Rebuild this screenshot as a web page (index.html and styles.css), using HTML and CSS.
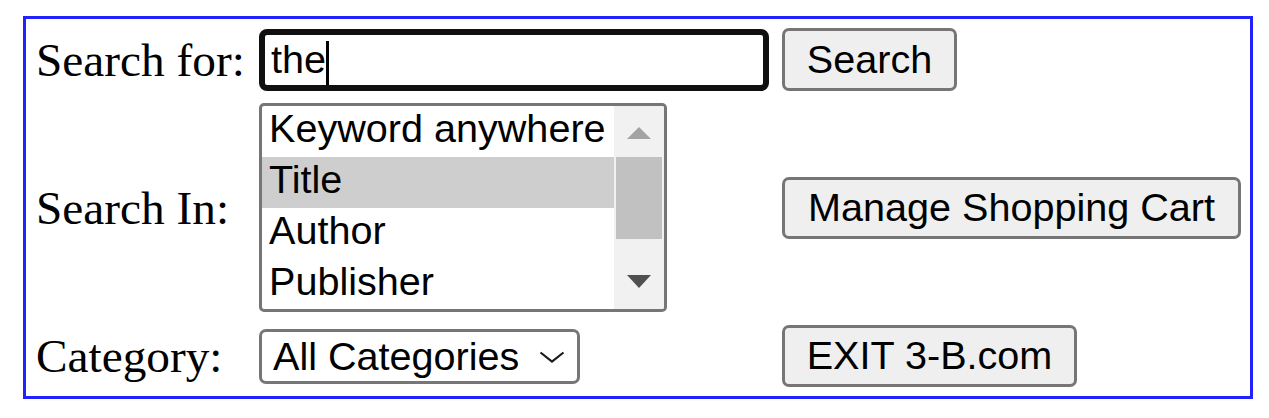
FILE: index.html
```html
<html>
    <head>
        <link rel="stylesheet" href="styles.css">
    </head>
    <body>
        <form class="search-box">
            <label class="label">Search for:</label>
            <div class="cell">
                <div class="text-input">the<span class="caret"></span></div>
            </div>
            <div class="cell">
                <button type="button" class="btn btn-search">Search</button>
            </div>

            <label class="label">Search In:</label>
            <div class="cell">
                <div class="listbox">
                    <ul class="options">
                        <li class="option">Keyword anywhere</li>
                        <li class="option option--selected">Title</li>
                        <li class="option">Author</li>
                        <li class="option">Publisher</li>
                    </ul>
                    <div class="scrollbar">
                        <div class="scroll-btn"><span class="arrow arrow--up"></span></div>
                        <div class="scroll-thumb"></div>
                        <div class="scroll-track"></div>
                        <div class="scroll-btn"><span class="arrow arrow--down"></span></div>
                    </div>
                </div>
            </div>
            <div class="cell">
                <button type="button" class="btn btn-cart">Manage Shopping Cart</button>
            </div>

            <label class="label">Category:</label>
            <div class="cell">
                <div class="select">
                    <span>All Categories</span>
                    <svg class="chevron" width="26" height="12" viewBox="0 0 26 12">
                        <polyline points="1.5,1.5 13,10.5 24.5,1.5" fill="none" stroke="#1a1a1a" stroke-width="2.2" />
                    </svg>
                </div>
            </div>
            <div class="cell">
                <button type="button" class="btn btn-exit">EXIT 3-B.com</button>
            </div>
        </form>
    </body>
</html>
```

FILE: styles.css
```css
* {
    box-sizing: border-box;
}

body {
    margin: 0;
    background-color: #fff;
    color: #000;
    font-family: "Liberation Serif", "Times New Roman", serif;
}

.search-box {
    display: grid;
    grid-template-columns: 223px 523px 459px;
    grid-template-rows: 63px 209px 63px;
    row-gap: 12px;
    width: fit-content;
    margin: 16px 0 0 23px;
    padding: 9px 9px 9px 10px;
    border: 3px solid #2222ff;
}

.label {
    align-self: center;
    font-size: 47.3px;
    white-space: nowrap;
}

.cell {
    display: flex;
    align-items: center;
}

/* text field with focus ring */
.text-input {
    display: flex;
    align-items: center;
    width: 510px;
    height: 62px;
    padding-left: 6px;
    border: 6px solid #101010;
    border-radius: 8px;
    font-family: "Liberation Sans", Arial, sans-serif;
    font-size: 39.6px;
    white-space: pre;
}

.caret {
    display: inline-block;
    width: 3px;
    height: 44px;
    margin-top: 6px;
    background-color: #000;
}

.btn {
    height: 62px;
    padding: 0;
    border: 3px solid #767676;
    border-radius: 7px;
    background-color: #efefef;
    color: #000;
    font-family: "Liberation Sans", Arial, sans-serif;
    font-size: 39.6px;
    text-align: center;
    white-space: nowrap;
}

.btn-search {
    width: 175px;
    height: 63px;
}

.btn-cart {
    width: 459px;
}

.btn-exit {
    width: 295px;
}

/* listbox */
.listbox {
    display: flex;
    width: 408px;
    height: 209px;
    border: 3px solid #767676;
    border-radius: 5px;
    overflow: hidden;
    font-family: "Liberation Sans", Arial, sans-serif;
    font-size: 39.6px;
}

.options {
    flex: 1;
    margin: 0;
    padding: 0;
    list-style: none;
}

.option {
    height: 51px;
    line-height: 44px;
    padding: 0 0 7px 7px;
    white-space: nowrap;
}

.option--selected {
    background-color: #cecece;
}

.scrollbar {
    display: flex;
    flex-direction: column;
    width: 50px;
    background-color: #f1f1f1;
}

.scroll-btn {
    display: flex;
    align-items: center;
    justify-content: center;
    height: 51px;
    flex-shrink: 0;
}

.scroll-thumb {
    height: 82px;
    margin: 0 2px;
    background-color: #c1c1c1;
    flex-shrink: 0;
}

.scroll-track {
    flex: 1;
}

.arrow {
    width: 0;
    height: 0;
    border-left: 12.5px solid transparent;
    border-right: 12.5px solid transparent;
}

.arrow--up {
    margin-top: 2px;
    border-bottom: 12px solid #a3a3a3;
}

.arrow--down {
    margin-bottom: 4px;
    border-top: 13px solid #505050;
}

/* dropdown */
.select {
    display: flex;
    align-items: center;
    justify-content: space-between;
    width: 321px;
    height: 55px;
    margin-top: 2px;
    padding: 0 12px 0 11px;
    border: 3px solid #767676;
    border-radius: 7px;
    font-family: "Liberation Sans", Arial, sans-serif;
    font-size: 39.6px;
    white-space: nowrap;
}

.chevron {
    margin-top: 1px;
}
```
